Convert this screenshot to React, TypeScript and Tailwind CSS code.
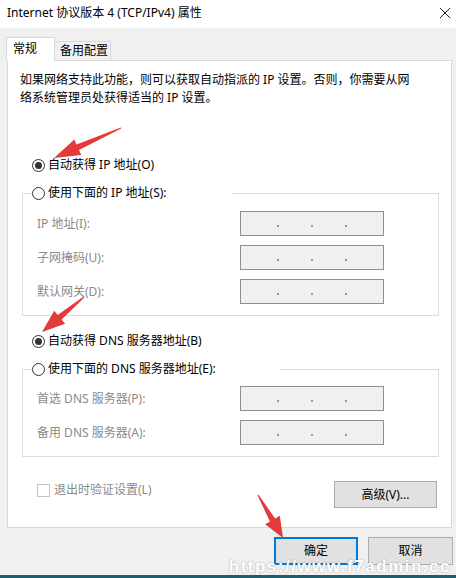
import React from "react";

const FONT = "font-['Noto_Sans','Noto_Sans_CJK_SC',sans-serif]";

// Red annotation arrows drawn over the dialog (tail -> tip, in page pixels).
const ARROWS: [number, number, number, number][] = [
  [121, 128, 54, 158],
  [84, 297, 42, 332],
  [258, 495, 283, 538],
];

function arrowPoints(tx: number, ty: number, px: number, py: number) {
  const dx = px - tx;
  const dy = py - ty;
  const len = Math.hypot(dx, dy);
  const ux = dx / len;
  const uy = dy / len;
  const nx = -uy;
  const ny = ux;
  const head = Math.min(26, len * 0.42);
  const bx = px - ux * head;
  const by = py - uy * head;
  const pts = [
    [tx + nx * 0.6, ty + ny * 0.6],
    [bx + nx * 3, by + ny * 3],
    [bx + nx * 8.5, by + ny * 8.5],
    [px, py],
    [bx - nx * 8.5, by - ny * 8.5],
    [bx - nx * 3, by - ny * 3],
    [tx - nx * 0.6, ty - ny * 0.6],
  ];
  return pts.map(([x, y]) => `${x.toFixed(1)},${y.toFixed(1)}`).join(" ");
}

function Radio({ checked }: { checked?: boolean }) {
  return (
    <span className="flex h-[13px] w-[13px] shrink-0 items-center justify-center rounded-full border border-[#333] bg-white">
      {checked && <span className="h-[7px] w-[7px] rounded-full bg-[#333]" />}
    </span>
  );
}

function IpBox() {
  return (
    <div className="flex h-[25px] w-[144px] items-center justify-between border border-[#8e8e8e] bg-[#f0f0f0] px-[36px] pt-[4px]">
      <span className="h-[2px] w-[2px] bg-[#9a9a9a]" />
      <span className="h-[2px] w-[2px] bg-[#9a9a9a]" />
      <span className="h-[2px] w-[2px] bg-[#9a9a9a]" />
    </div>
  );
}

function Row({ label }: { label: string }) {
  return (
    <div className="flex items-center">
      <span className="w-[203px] text-[#8a8a8a]">{label}</span>
      <IpBox />
    </div>
  );
}

export default function App() {
  return (
    <div className={`relative flex h-[578px] w-[456px] flex-col overflow-hidden bg-[#f0f0f0] text-[12px] leading-[18px] text-black ${FONT}`}>
      {/* title bar */}
      <div className="flex h-[28px] items-center justify-between bg-white pl-[7px] pr-[5px]">
        <span className="pb-[2px]">Internet 协议版本 4 (TCP/IPv4) 属性</span>
        <svg width="12" height="12" viewBox="0 0 12 12" className="mb-[3px]">
          <path d="M1 1 L11 11 M11 1 L1 11" stroke="#222" strokeWidth="1" />
        </svg>
      </div>

      {/* tabs */}
      <div className="ml-[6px] mt-[9px] flex h-[23px] items-end">
        <div className="relative z-10 -mb-px flex h-[24px] w-[49px] items-start border-x border-t border-[#d9d9d9] bg-white pl-[6px] pt-[2px]">
          常规
        </div>
        <div className="flex h-[19px] w-[56px] items-center border-r border-t border-[#d9d9d9] bg-[#f0f0f0] pl-[5px]">
          备用配置
        </div>
      </div>

      {/* tab panel */}
      <div className="ml-[7px] flex h-[468px] w-[445px] flex-col border border-[#d9d9d9] bg-white">
        <p className="pl-[12px] pt-[10px] whitespace-nowrap">
          如果网络支持此功能，则可以获取自动指派的 IP 设置。否则，你需要从网
          <br />
          络系统管理员处获得适当的 IP 设置。
        </p>

        <div className="ml-[24px] mt-[49px] flex items-center gap-[3px]">
          <Radio checked />
          <span>自动获得 IP 地址(O)</span>
        </div>

        <fieldset className="ml-[14px] mt-[10px] w-[417px] border border-[#dcdcdc] pb-[11px]">
          <legend className="ml-[9px] flex w-[200px] items-center gap-[3px]">
            <Radio />
            <span>使用下面的 IP 地址(S):</span>
          </legend>
          <div className="mt-[9px] flex flex-col gap-[9px] pl-[14px]">
            <Row label="IP 地址(I):" />
            <Row label="子网掩码(U):" />
            <Row label="默认网关(D):" />
          </div>
        </fieldset>

        <div className="ml-[24px] mt-[16px] flex items-center gap-[3px]">
          <Radio checked />
          <span>自动获得 DNS 服务器地址(B)</span>
        </div>

        <fieldset className="ml-[14px] mt-[10px] w-[417px] border border-[#dcdcdc] pb-[11px]">
          <legend className="ml-[9px] flex w-[248px] items-center gap-[3px]">
            <Radio />
            <span>使用下面的 DNS 服务器地址(E):</span>
          </legend>
          <div className="mt-[8px] flex flex-col gap-[9px] pl-[14px]">
            <Row label="首选 DNS 服务器(P):" />
            <Row label="备用 DNS 服务器(A):" />
          </div>
        </fieldset>

        <div className="ml-[29px] mr-[14px] mt-[24px] flex items-start justify-between">
          <div className="flex items-center gap-[4px] text-[#8a8a8a]">
            <span className="h-[13px] w-[13px] border border-[#c4c4c4] bg-white" />
            <span>退出时验证设置(L)</span>
          </div>
          <button className="flex h-[27px] w-[103px] items-center justify-center border border-[#adadad] bg-[#e1e1e1]">
            高级(V)...
          </button>
        </div>
      </div>

      {/* dialog buttons */}
      <div className="mt-[9px] flex justify-end gap-[10px] pr-[3px] leading-[13px]">
        <button className="flex h-[28px] w-[84px] items-center justify-center border-2 border-[#0078d7] bg-[#e1e1e1] pb-[2px]">
          确定
        </button>
        <button className="flex h-[28px] w-[85px] items-center justify-center border border-[#adadad] bg-[#e1e1e1] pb-[2px]">
          取消
        </button>
      </div>

      <div className="mt-auto h-[3px] bg-[#1f5d6d]" />

      {/* watermark */}
      <span className="absolute bottom-[5px] right-[5px] font-['Liberation_Sans',sans-serif] text-[17px] font-bold leading-[12px] tracking-[1.5px] text-white [text-shadow:0_0_2px_rgba(0,0,0,0.35)]">
        https://www.f7admin.cc
      </span>

      {/* annotation arrows */}
      <svg className="pointer-events-none absolute inset-0" width="456" height="578">
        {ARROWS.map(([tx, ty, px, py], i) => (
          <polygon key={i} points={arrowPoints(tx, ty, px, py)} fill="#e33b3b" />
        ))}
      </svg>
    </div>
  );
}
